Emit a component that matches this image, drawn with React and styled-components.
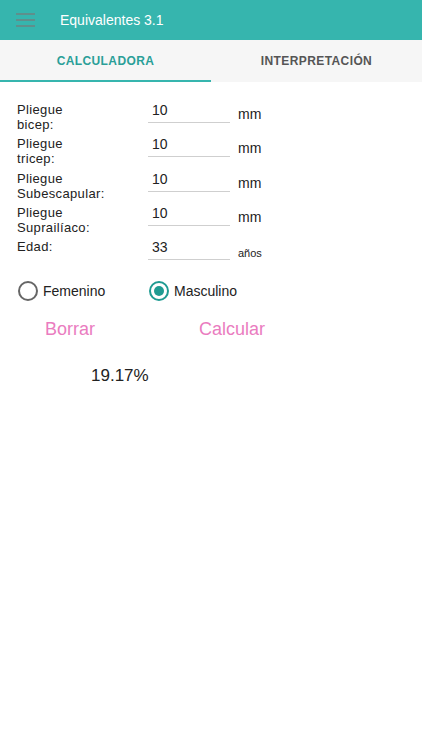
import React, { useState } from 'react';
import styled, { createGlobalStyle } from 'styled-components';

const GlobalStyle = createGlobalStyle`
    body {
        margin: 0;
        background: #ffffff;
        font-family: "Liberation Sans", Arial, sans-serif;
    }
`;

const Screen = styled.div`
    width: 422px;
    min-height: 750px;
    background: #ffffff;
`;

const TopBar = styled.header`
    height: 40px;
    background: #36b5ae;
    display: flex;
    align-items: center;
    padding-left: 16px;
    box-sizing: border-box;
`;

const Burger = styled.div`
    width: 19px;
    display: flex;
    flex-direction: column;
    gap: 4px;
    margin-right: 25px;

    span {
        display: block;
        height: 2px;
        background: #5f8f8c;
    }
`;

const Title = styled.h1`
    margin: 0;
    font-size: 14px;
    font-weight: 400;
    color: #ffffff;
`;

const Tabs = styled.nav`
    height: 42px;
    background: #f6f6f6;
    display: flex;
`;

const Tab = styled.div`
    flex: 1;
    display: flex;
    align-items: center;
    justify-content: center;
    font-size: 12px;
    font-weight: 700;
    letter-spacing: 0.4px;
    color: ${p => (p.$active ? '#2a9f98' : '#555555')};
    border-bottom: 2px solid ${p => (p.$active ? '#36b5ae' : 'transparent')};
    box-sizing: border-box;
    padding-top: 2px;
`;

const Form = styled.section`
    padding: 20px 0 0 17px;
    display: grid;
    grid-template-columns: 131px 82px auto;
    grid-auto-rows: 34.3px;
    align-items: start;
`;

const Label = styled.div`
    font-size: 13px;
    line-height: 15px;
    letter-spacing: 0.35px;
    color: #222222;
`;

const Field = styled.input`
    width: 100%;
    box-sizing: border-box;
    border: none;
    border-bottom: 1px solid #cfcfcf;
    padding: 0 0 4px 4px;
    font-family: inherit;
    font-size: 14px;
    line-height: 16px;
    color: #222222;
    background: transparent;
    outline: none;
`;

const Unit = styled.div`
    padding: ${p => (p.$small ? 6 : 4)}px 0 0 8px;
    font-size: ${p => (p.$small ? 11 : 14)}px;
    line-height: 16px;
    color: #222222;
`;

const RadioRow = styled.div`
    display: flex;
    align-items: center;
    padding: 8px 0 0 18px;
`;

const RadioItem = styled.label`
    display: flex;
    align-items: center;
    gap: 5px;
    font-size: 14px;
    color: #222222;
    width: 131px;
    cursor: pointer;
`;

const Circle = styled.span`
    width: 20px;
    height: 20px;
    box-sizing: border-box;
    border-radius: 50%;
    border: 2px solid ${p => (p.$on ? '#1f9b92' : '#666666')};
    display: flex;
    align-items: center;
    justify-content: center;

    &::after {
        content: '';
        width: 10px;
        height: 10px;
        border-radius: 50%;
        background: ${p => (p.$on ? '#1f9b92' : 'transparent')};
    }
`;

const Actions = styled.div`
    display: flex;
    padding: 17px 0 0 45px;
    gap: 104px;
`;

const TextButton = styled.button`
    border: none;
    background: none;
    padding: 0;
    font-family: inherit;
    font-size: 18px;
    line-height: 22px;
    color: #ea7cc0;
    cursor: pointer;
`;

const Result = styled.div`
    padding: 26px 0 0 91px;
    font-size: 17px;
    line-height: 20px;
    color: #222222;
`;

const fields = [
    { label: ['Pliegue', 'bicep:'], value: '10', unit: 'mm' },
    { label: ['Pliegue', 'tricep:'], value: '10', unit: 'mm' },
    { label: ['Pliegue', 'Subescapular:'], value: '10', unit: 'mm' },
    { label: ['Pliegue', 'Suprailíaco:'], value: '10', unit: 'mm' },
    { label: ['Edad:'], value: '33', unit: 'años', small: true },
];

const App = () => {
    const [sex, setSex] = useState('m');

    return (
        <Screen>
            <GlobalStyle />
            <TopBar>
                <Burger>
                    <span />
                    <span />
                    <span />
                </Burger>
                <Title>Equivalentes 3.1</Title>
            </TopBar>
            <Tabs>
                <Tab $active>CALCULADORA</Tab>
                <Tab>INTERPRETACIÓN</Tab>
            </Tabs>
            <Form>
                {fields.map(f => (
                    <React.Fragment key={f.label.join(' ')}>
                        <Label>
                            {f.label.map(l => (
                                <div key={l}>{l}</div>
                            ))}
                        </Label>
                        <Field defaultValue={f.value} />
                        <Unit $small={f.small}>{f.unit}</Unit>
                    </React.Fragment>
                ))}
            </Form>
            <RadioRow>
                <RadioItem onClick={() => setSex('f')}>
                    <Circle $on={sex === 'f'} />
                    Femenino
                </RadioItem>
                <RadioItem onClick={() => setSex('m')}>
                    <Circle $on={sex === 'm'} />
                    Masculino
                </RadioItem>
            </RadioRow>
            <Actions>
                <TextButton>Borrar</TextButton>
                <TextButton>Calcular</TextButton>
            </Actions>
            <Result>19.17%</Result>
        </Screen>
    );
};

export default App;
